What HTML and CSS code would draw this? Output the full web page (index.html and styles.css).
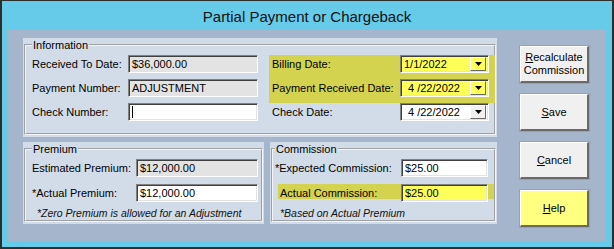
FILE: index.html
```html
<!DOCTYPE html>
<html>
<head>
<meta charset="utf-8">
<title>Partial Payment or Chargeback</title>
<link rel="stylesheet" href="styles.css">
</head>
<body>
<div class="window">
  <div class="titlebar">Partial Payment or Chargeback</div>
  <div class="client">
    <div class="groups">
      <div class="panel">
        <fieldset class="group group-info">
          <legend>Information</legend>
          <div class="info-grid">
            <div class="col-left">
              <div class="row"><span class="lbl">Received To Date:</span><span class="field ro w130">$36,000.00</span></div>
              <div class="row"><span class="lbl">Payment Number:</span><span class="field ro w130">ADJUSTMENT</span></div>
              <div class="row"><span class="lbl">Check Number:</span><span class="field w130"><span class="caret"></span></span></div>
            </div>
            <div class="col-right">
              <div class="band">
                <div class="row rrow"><span class="lbl">Billing Date:</span><span class="combo yellow"><span class="val">1/1/2022</span><span class="drop"><svg width="7" height="4" viewBox="0 0 7 4"><polygon points="0,0 7,0 3.5,4" fill="#000"/></svg></span></span></div>
                <div class="row rrow"><span class="lbl">Payment Received Date:</span><span class="combo yellow"><span class="val pad">4 /22/2022</span><span class="drop"><svg width="7" height="4" viewBox="0 0 7 4"><polygon points="0,0 7,0 3.5,4" fill="#000"/></svg></span></span></div>
              </div>
              <div class="row rrow"><span class="lbl">Check Date:</span><span class="combo"><span class="val pad">4 /22/2022</span><span class="drop"><svg width="7" height="4" viewBox="0 0 7 4"><polygon points="0,0 7,0 3.5,4" fill="#000"/></svg></span></span></div>
            </div>
          </div>
        </fieldset>
      </div>
      <div class="bottom">
        <div class="panel panel-prem">
          <fieldset class="group group-prem">
            <legend>Premium</legend>
            <div class="rows">
              <div class="row"><span class="lbl">Estimated Premium:</span><span class="field ro w122">$12,000.00</span></div>
              <div class="row"><span class="lbl">*Actual Premium:</span><span class="field w122">$12,000.00</span></div>
            </div>
            <div class="note">*Zero Premium is allowed for an Adjustment</div>
          </fieldset>
        </div>
        <div class="panel panel-comm">
          <fieldset class="group group-comm">
            <legend>Commission</legend>
            <div class="rows">
              <div class="row crow"><span class="lbl">*Expected Commission:</span><span class="field w87">$25.00</span></div>
              <div class="row crow hl"><span class="lbl">Actual Commission:</span><span class="field yellow w87">$25.00</span></div>
            </div>
            <div class="note">*Based on Actual Premium</div>
          </fieldset>
        </div>
      </div>
    </div>
    <div class="buttons">
      <div class="btn"><span><u>R</u>ecalculate<br>Commission</span></div>
      <div class="btn"><span><u>S</u>ave</span></div>
      <div class="btn"><span><u>C</u>ancel</span></div>
      <div class="btn help"><span><u>H</u>elp</span></div>
    </div>
  </div>
</div>
</body>
</html>
```
FILE: styles.css
```css
* { box-sizing: border-box; }
html, body { margin: 0; padding: 0; }
body {
  font-family: "Liberation Sans", Arial, sans-serif;
  font-size: 11px;
  color: #000;
  background: #2d2d2d;
}
.window {
  width: 614px;
  height: 249px;
  background: #66cbe9;
  border: 2px solid #2d2d2d;
  border-top-width: 1px;
  display: flex;
  flex-direction: column;
  overflow: hidden;
}
.titlebar {
  height: 29px;
  flex: none;
  display: flex;
  align-items: center;
  justify-content: center;
  font-family: "Liberation Sans Narrow", "Liberation Sans", sans-serif;
  font-size: 15px;
  color: #111;
  padding-top: 1px;
}
.client {
  flex: 1;
  margin: 0 6px 6px 6px;
  background: #a5b5cc;
  padding: 8px 0 0 15px;
  display: flex;
  gap: 23px;
}
.groups {
  width: 474px;
  display: flex;
  flex-direction: column;
  gap: 5px;
}
.panel {
  background: #d2dce8;
  padding: 0 1px 2px 1px;
}
.group {
  margin: 0;
  min-width: 0;
  border: 2px groove #f2f4f7;
  padding: 3px 0 12px 6px;
}
.group legend {
  padding: 0 1px;
  line-height: 14px;
  height: 14px;
}
.info-grid {
  display: grid;
  grid-template-columns: 226px 226px;
  column-gap: 11px;
}
.col-left { display: flex; flex-direction: column; gap: 6px; }
.col-right { display: flex; flex-direction: column; }
.band {
  background: #d3d34f;
  display: flex;
  flex-direction: column;
  gap: 6px;
  padding-bottom: 6px;
}
.row {
  height: 18px;
  display: flex;
  align-items: center;
  justify-content: space-between;
}
.rrow { padding: 0 6px 0 3px; }
.lbl { white-space: nowrap; }
.field {
  height: 18px;
  background: #fff;
  border: 1px solid;
  border-color: #808080 #fff #fff #808080;
  box-shadow: inset 1px 1px 0 #404040, inset -1px -1px 0 #e3e3e3;
  padding: 0 2px 0 3px;
  display: flex;
  align-items: center;
  white-space: nowrap;
}
.field.ro { background: #e3e3e3; }
.field.yellow { background: #ffff5a; }
.w130 { width: 130px; }
.w122 { width: 122px; }
.w87 { width: 87px; }
.caret {
  width: 1px;
  height: 12px;
  background: #000;
}
.combo {
  width: 89px;
  height: 18px;
  background: #fff;
  border: 1px solid;
  border-color: #808080 #fff #fff #808080;
  box-shadow: inset 1px 1px 0 #404040, inset -1px -1px 0 #e3e3e3;
  display: flex;
  align-items: center;
  padding: 2px 2px 2px 3px;
}
.combo.yellow { background: #ffff5a; }
.combo .val { flex: 1; white-space: nowrap; }
.combo .val.pad { padding-left: 4px; }
.drop {
  width: 16px;
  height: 14px;
  background: #f0f0f0;
  border: 1px solid;
  border-color: #fff #696969 #696969 #fff;
  display: flex;
  align-items: center;
  justify-content: center;
}
.combo.yellow .drop { background: #ffff5a; }
.bottom {
  display: flex;
  gap: 6px;
}
.panel-prem { width: 241px; }
.panel-comm { width: 227px; }
.group-prem { padding: 3px 3px 0 6px; }
.group-comm { padding: 3px 0 0 2px; }
.rows { display: flex; flex-direction: column; gap: 7px; }
.crow { padding-right: 6px; }
.crow.hl {
  margin-left: 3px;
  padding-left: 2px;
  background: linear-gradient(#d3d34f 0 15px, transparent 15px);
  align-items: flex-start;
}
.crow.hl .lbl { line-height: 18px; }
.note {
  margin-top: 4px;
  height: 14px;
  line-height: 14px;
  font-style: italic;
  font-size: 10.5px;
  padding-left: 5px;
  color: #111;
  white-space: nowrap;
}
.buttons {
  width: 69px;
  padding-top: 8px;
  display: flex;
  flex-direction: column;
  gap: 11px;
}
.btn {
  height: 37px;
  background: #f0f0f0;
  border-style: solid;
  border-width: 1px 2px 2px 1px;
  border-color: #fff #6a6a6a #6a6a6a #fff;
  box-shadow: 0 0 0 1px #a0a0a0;
  display: flex;
  align-items: center;
  justify-content: center;
  text-align: center;
  line-height: 13px;
}
.btn.help { background: #ffff80; }
```
